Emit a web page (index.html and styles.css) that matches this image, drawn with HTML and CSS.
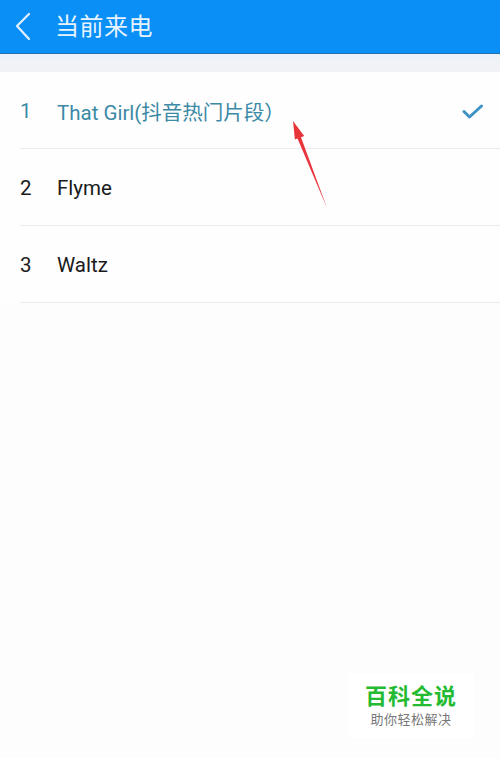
FILE: index.html
```html
<!DOCTYPE html>
<html lang="zh">
<head>
<meta charset="utf-8">
<title>当前来电</title>
<link rel="stylesheet" href="styles.css">
</head>
<body>
<div class="screen">
  <header class="topbar">
    <svg class="back" width="20" height="30" viewBox="0 0 20 30"><path d="M15 2 L3 14 L15 27" fill="none" stroke="#e3f0ff" stroke-width="2.2" stroke-linecap="round" stroke-linejoin="round"/></svg>
    <h1 class="title">当前来电</h1>
  </header>
  <div class="strip"></div>
  <ul class="list">
    <li class="row active"><span class="num">1</span><span class="name">That Girl(抖音热门片段）</span>
      <svg class="check" width="22" height="16" viewBox="0 0 22 16"><path d="M2 7.5 L7.5 13 L19.5 2" fill="none" stroke="#3e93c4" stroke-width="3" stroke-linecap="round" stroke-linejoin="round"/></svg>
    </li>
    <li class="row"><span class="num">2</span><span class="name">Flyme</span></li>
    <li class="row"><span class="num">3</span><span class="name">Waltz</span></li>
  </ul>
  <svg class="arrow" width="50" height="100" viewBox="0 0 50 100"><path d="M11 9 L22.2 24 L19 25.2 L45 96 L15.5 26.5 L12.9 27.6 Z" fill="#e8343b"/></svg>
  <div class="mark">
    <div class="mark-title">百科全说</div>
    <div class="mark-sub">助你轻松解决</div>
  </div>
</div>
</body>
</html>
```
FILE: styles.css
```css
* { box-sizing: border-box; }
html, body { margin: 0; padding: 0; }
body {
  width: 500px;
  height: 758px;
  background: #fdfdfe;
  font-family: Roboto, "Noto Sans CJK SC", sans-serif;
  overflow: hidden;
}
.screen { position: relative; width: 500px; height: 758px; }
.topbar {
  height: 54px;
  background: #0a8ff6;
  border-bottom: 1px solid #1f6fae;
  display: flex;
  align-items: center;
  padding-left: 14px;
}
.back { display: block; margin-top: 0; }
.title {
  margin: 0 0 0 21px;
  font-family: "Noto Sans CJK SC", sans-serif;
  font-weight: 400;
  font-size: 24px;
  color: #e6f3ff;
  letter-spacing: 0.5px;
  line-height: 1;
  padding-bottom: 4px;
}
.strip { height: 18px; background: linear-gradient(#eaf2fa, #f1f2f6 40%); }
.list {
  list-style: none;
  margin: 0;
  padding: 0 0 0 20px;
  background: #fefefe;
}
.row {
  height: 77px;
  display: flex;
  align-items: center;
  border-bottom: 1px solid #ececef;
  font-size: 20.5px;
  color: #1a1a1a;
  padding-top: 2px;
}
.num { width: 37px; }
.name { flex: 1; font-family: Roboto, "Noto Sans CJK SC", sans-serif; }
.active { color: #3b8aa6; }
.check { margin-right: 16px; margin-top: 2px; }
.arrow { position: absolute; left: 282px; top: 112px; }
.mark {
  position: absolute;
  left: 348px;
  top: 674px;
  width: 126px;
  height: 64px;
  background: #ffffff;
  display: flex;
  flex-direction: column;
  align-items: center;
  padding-top: 6px;
  gap: 2px;
  font-family: "Noto Sans CJK SC", sans-serif;
}
.mark-title { font-size: 22px; line-height: 28px; color: #24bb33; font-weight: 700; letter-spacing: 1px; }
.mark-sub { font-size: 13px; line-height: 18px; color: #777; letter-spacing: 0.5px; }
```
